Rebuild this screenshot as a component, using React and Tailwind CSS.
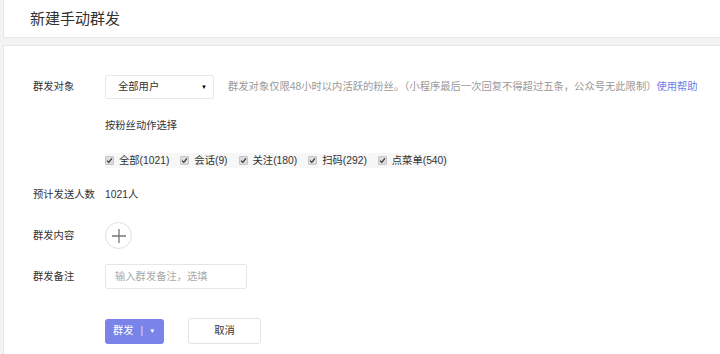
import React from 'react';

const font = { fontFamily: '"Liberation Sans", "Noto Sans CJK SC", sans-serif' };

const actions = [
  { label: '全部(1021)' },
  { label: '会话(9)' },
  { label: '关注(180)' },
  { label: '扫码(292)' },
  { label: '点菜单(540)' },
];

const Check = () => (
  <span className="w-[9px] h-[9px] rounded-[1px] bg-[#dcdcdc] border border-[#c8c8c8] flex items-center justify-center shrink-0">
    <svg width="7" height="7" viewBox="0 0 8 8">
      <path d="M1.2 4.2 L3.2 6.1 L6.8 1.6" stroke="#333" strokeWidth="1.4" fill="none" />
    </svg>
  </span>
);

export default function App() {
  return (
    <div className="w-[720px] h-[354px] bg-[#f3f3f3] pl-[3px] overflow-hidden text-[#333]" style={font}>
      {/* Header */}
      <div className="h-[38px] bg-white border-b border-l border-[#e6e6e6] flex items-center pl-[26px]">
        <h1 className="text-[15px] leading-none text-[#333]">新建手动群发</h1>
      </div>

      {/* Body */}
      <div className="mt-[7px] h-[320px] bg-white border-t border-l border-[#e6e6e6] pl-[29px] pt-[29px] text-[10.3px]">
        <div className="flex items-center h-[24px]">
          <span className="w-[72px] shrink-0">群发对象</span>
          <div className="w-[109px] h-[24px] border border-[#e8e8e8] rounded-[2px] flex items-center justify-between pl-[12px] pr-[6px]">
            <span>全部用户</span>
            <span className="text-[6px] text-black">▼</span>
          </div>
          <span className="ml-[14px] text-[#999] whitespace-nowrap">
            群发对象仅限48小时以内活跃的粉丝。（小程序最后一次回复不得超过五条，公众号无此限制）
            <span className="text-[#6f7ee8]">使用帮助</span>
          </span>
        </div>

        <div className="flex items-center h-[14px] mt-[20px] pl-[72px]">按粉丝动作选择</div>

        <div className="flex mt-[20px] pl-[72px]">
          <div className="flex items-center h-[15px] bg-[#f7f7f7] gap-[11px] pr-[1px]">
            {actions.map((a) => (
              <label key={a.label} className="flex items-center gap-[5px]">
                <Check />
                <span>{a.label}</span>
              </label>
            ))}
          </div>
        </div>

        <div className="flex items-center h-[14px] mt-[20px]">
          <span className="w-[72px] shrink-0">预计发送人数</span>
          <span>1021人</span>
        </div>

        <div className="flex items-center mt-[20px]">
          <span className="w-[72px] shrink-0">群发内容</span>
          <button className="w-[27px] h-[27px] rounded-full border border-[#e0e0e0] flex items-center justify-center">
            <svg width="16" height="16" viewBox="0 0 16 16">
              <path d="M8 1 V15 M1 8 H15" stroke="#777" strokeWidth="1.3" />
            </svg>
          </button>
        </div>

        <div className="flex items-center mt-[15px]">
          <span className="w-[72px] shrink-0">群发备注</span>
          <input
            placeholder="输入群发备注，选填"
            className="w-[142px] h-[25px] border border-[#e6e6e6] rounded-[2px] px-[9px] text-[10.3px] placeholder:text-[#aaa] outline-none"
            style={font}
          />
        </div>

        <div className="flex items-center mt-[29px] pl-[72px] gap-[24px]">
          <button className="w-[59px] h-[25px] rounded-[3px] bg-[#7a84e8] text-white flex items-center pl-[8px] text-[10.3px]" style={font}>
            <span>群发</span>
            <span className="ml-[7px] text-[#dfe2fb]">|</span>
            <span className="ml-[6px] text-[6px]">▼</span>
          </button>
          <button className="w-[73px] h-[26px] rounded-[3px] border border-[#e3e3e3] bg-white text-[#333] text-[10.3px]" style={font}>
            取消
          </button>
        </div>
      </div>
    </div>
  );
}
